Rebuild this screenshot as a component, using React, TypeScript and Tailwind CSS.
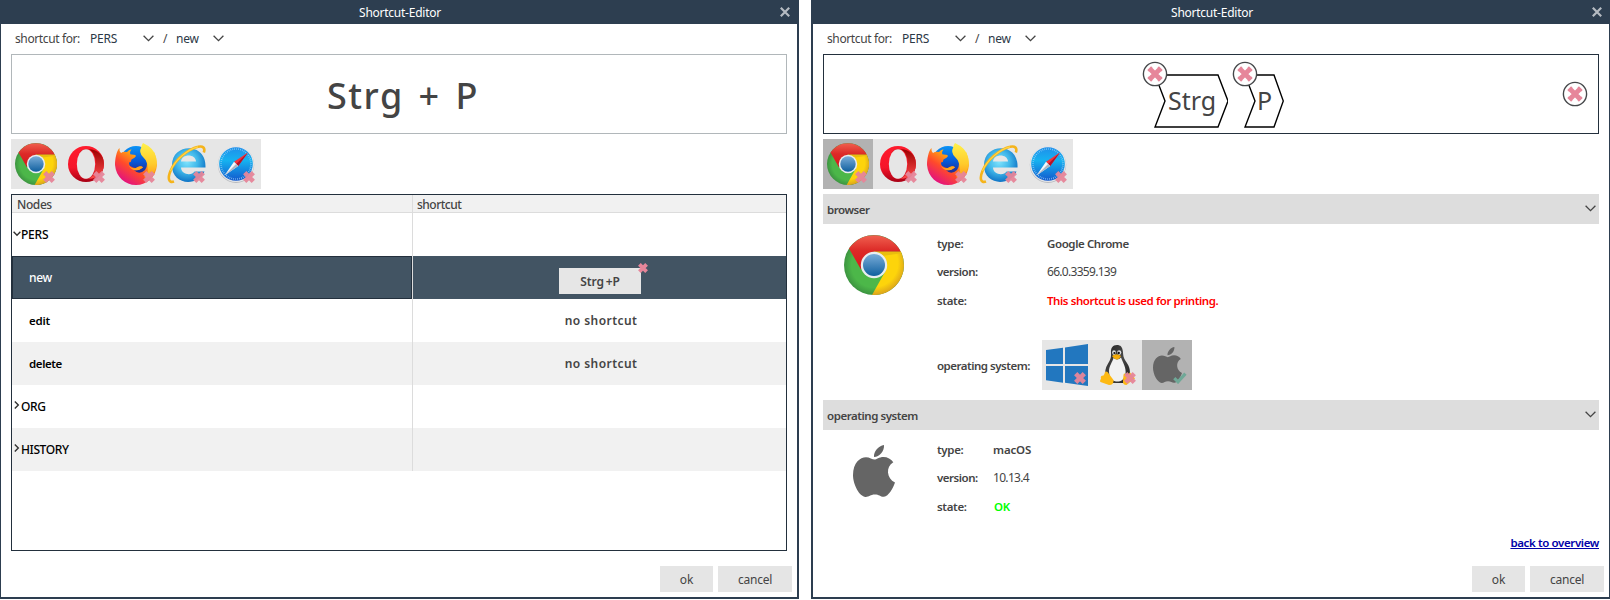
import React, { useId } from "react";

type IconProps = { className?: string };

function Cross({ className = "" }: IconProps) {
  return (
    <svg viewBox="0 0 12 12" className={className}>
      <path d="M1.7 1.7 10.3 10.3M10.3 1.7 1.7 10.3" stroke="#e6869a" strokeWidth="4.6" fill="none" />
    </svg>
  );
}

function CircledCross({ className = "" }: IconProps) {
  return (
    <svg viewBox="0 0 26 26" className={className}>
      <circle cx="13" cy="13" r="11.6" fill="#fff" stroke="#45474a" strokeWidth="1.4" />
      <path d="M8 8 18 18M18 8 8 18" stroke="#e6869a" strokeWidth="4.8" fill="none" />
      <path d="M6 9.800 9.800 6M16.200 6 20 9.800M6 16.200 9.800 20M20 16.200 16.200 20" stroke="#e6869a" strokeWidth="2" />
    </svg>
  );
}

function CheckMark({ className = "" }: IconProps) {
  return (
    <svg viewBox="0 0 14 12" className={className}>
      <path d="M1.300 6.200 5 9.800 12.400 1.600" stroke="#6fa897" strokeWidth="3.200" fill="none" />
    </svg>
  );
}

function Chevron({ className = "" }: IconProps) {
  return (
    <svg viewBox="0 0 11 7" className={className}>
      <path d="M.6 .7 5.500 5.600 10.400 .7" stroke="#444" strokeWidth="1.300" fill="none" />
    </svg>
  );
}

function TreeArrow({ className = "" }: IconProps) {
  return (
    <svg viewBox="0 0 8 6" className={className}>
      <path d="M.6 .8 4 4.300 7.400 .8" stroke="#333" strokeWidth="1.400" fill="none" />
    </svg>
  );
}

function Chrome({ className = "" }: IconProps) {
  const id = useId();
  return (
    <svg viewBox="0 0 60 60" className={className}>
      <defs>
        <linearGradient id={id + "r"} x1="0" y1="0" x2="0" y2="1">
          <stop offset="0" stopColor="#f0604f" />
          <stop offset=".45" stopColor="#dc2a27" />
          <stop offset="1" stopColor="#d8171c" />
        </linearGradient>
        <radialGradient id={id + "g"} cx=".5" cy=".5" r=".5">
          <stop offset=".75" stopColor="#4cb749" />
          <stop offset="1" stopColor="#3c9440" />
        </radialGradient>
        <radialGradient id={id + "y"} gradientUnits="userSpaceOnUse" cx="30" cy="28" r="32">
          <stop offset=".75" stopColor="#fdd40b" />
          <stop offset="1" stopColor="#dba31c" />
        </radialGradient>
        <linearGradient id={id + "b"} x1="0" y1="0" x2="0" y2="1">
          <stop offset="0" stopColor="#79acd8" />
          <stop offset="1" stopColor="#10609f" />
        </linearGradient>
      </defs>
      <circle cx="30" cy="30" r="30" fill={`url(#${id}g)`} />
      <path d="M30 16.5H56.7A30 30 0 0 1 28 60L41.5 36Z" fill={`url(#${id}y)`} />
      <path d="M30 16.5H56.7L57.4 18.2 38 21Z" fill="#e9be0e" />
      <path d="M5 13.6A30 30 0 0 1 56.7 16.5H30L17 34.5Z" fill={`url(#${id}r)`} />
      <circle cx="30" cy="30" r="13.2" fill="#e9edf0" />
      <circle cx="30" cy="30" r="11" fill={`url(#${id}b)`} />
    </svg>
  );
}

function Opera({ className = "" }: IconProps) {
  const id = useId();
  return (
    <svg viewBox="0 0 50 50" className={className}>
      <defs>
        <linearGradient id={id + "a"} x1="0" y1="0" x2="0" y2="1">
          <stop offset="0" stopColor="#ff1b2d" />
          <stop offset=".6" stopColor="#f5152a" />
          <stop offset="1" stopColor="#a70014" />
        </linearGradient>
        <linearGradient id={id + "b"} x1="0" y1="0" x2="0" y2="1">
          <stop offset="0" stopColor="#9c0000" />
          <stop offset="1" stopColor="#ff4b4b" />
        </linearGradient>
      </defs>
      <circle cx="25" cy="25" r="18" fill={`url(#${id}a)`} />
      <path d="M18.5 14C21 10.5 25 9 28.5 10.7 37 15 37 35 28.5 39.3 25 41 21 39.5 18.5 36 27 44 43 39 43 25S27 6 18.5 14" fill={`url(#${id}b)`} />
      <ellipse cx="25" cy="25" rx="9.2" ry="14.8" fill="#e6e6e6" />
    </svg>
  );
}

function Firefox({ className = "" }: IconProps) {
  const id = useId();
  return (
    <svg viewBox="0 0 50 50" className={className}>
      <defs>
        <linearGradient id={id + "a"} x1=".8" y1=".1" x2=".2" y2=".9">
          <stop offset="0" stopColor="#ffd83a" />
          <stop offset=".3" stopColor="#ff9b16" />
          <stop offset=".6" stopColor="#ff4a2b" />
          <stop offset="1" stopColor="#e3127e" />
        </linearGradient>
        <linearGradient id={id + "b"} x1="0" y1="0" x2="0" y2="1">
          <stop offset="0" stopColor="#0a93f5" />
          <stop offset=".5" stopColor="#0756d6" />
          <stop offset="1" stopColor="#33156e" />
        </linearGradient>
        <linearGradient id={id + "c"} x1="0" y1="0" x2="0" y2="1">
          <stop offset="0" stopColor="#fff14a" />
          <stop offset=".6" stopColor="#ffcb2c" />
          <stop offset="1" stopColor="#ff9a17" />
        </linearGradient>
      </defs>
      <circle cx="25" cy="23" r="16" fill={`url(#${id}b)`} />
      <path d="M8.5 9Q8 12 10 14 12.5 12 16 13 17.5 10.8 20.5 10.3 18.8 12.5 19.2 15.2L24.5 16Q25.5 17.5 23.5 18.8L20.5 20.5Q20.5 23.2 18 23.5 17.8 27 21 28 25 30 28.5 27.5 31 26.5 32 28.500 28 32 23 31 28 36.500 34 31 38 26 34 18L38 14 43 13Q46 19 46 26C45 38 36 46 25 46S5 38 4 26C4 20 5.500 12 8.500 9" fill={`url(#${id}a)`} />
      <path d="M32 4Q43 9 45 18 48 29 40 37 35 40 33 38 38 34 36.500 28 37 23 32 18 27.500 13 30 9 30.500 6 32 4" fill={`url(#${id}c)`} />
      <path d="M17 25Q19 30 25 29 29 25.800 32 28.500 28 32 23 31 19 30 17 25" fill="#ffa51c" />
    </svg>
  );
}

function Explorer({ className = "" }: IconProps) {
  const id = useId();
  return (
    <svg viewBox="0 0 50 50" className={className}>
      <defs>
        <radialGradient id={id + "a"} cx=".45" cy=".4" r=".62">
          <stop offset="0" stopColor="#7fe3fd" />
          <stop offset=".5" stopColor="#42b9ea" />
          <stop offset="1" stopColor="#0c70c4" />
        </radialGradient>
      </defs>
      <path fillRule="evenodd" d="M44.5 28.5H20C20.500 36.500 31.500 36.500 33.500 32.500H43.500C37 48 10.500 46.500 11 26 11 3.500 46 3 44.500 28.500M20 22.500H35C34.500 14.500 20.700 14.500 20 22.500" fill={`url(#${id}a)`} />
      <path d="M42.800 13.500C44.500 9 42 6.500 37 7.800 27 10 14 21 9.500 32 6.500 39 7.500 44.500 13 42.500" stroke="#f5b41b" strokeWidth="2.600" fill="none" />
      <path d="M37 7.800C27 10 14 21 9.500 32" stroke="#ffd447" strokeWidth="1.200" fill="none" />
    </svg>
  );
}

function Safari({ className = "" }: IconProps) {
  const id = useId();
  return (
    <svg viewBox="0 0 50 50" className={className}>
      <defs>
        <linearGradient id={id + "a"} x1="0" y1="0" x2="0" y2="1">
          <stop offset="0" stopColor="#1f8fea" />
          <stop offset=".4" stopColor="#16b2f0" />
          <stop offset="1" stopColor="#1258cd" />
        </linearGradient>
      </defs>
      <circle cx="25" cy="25.700" r="18.200" fill="#b7b9bd" />
      <circle cx="25" cy="25" r="18" fill="#e4e6ea" />
      <circle cx="25" cy="25" r="16.800" fill={`url(#${id}a)`} />
      <circle cx="25" cy="25" r="15" fill="none" stroke="#9fd4f7" strokeWidth="1.700" strokeDasharray=".6 1.360" />
      <path d="M37 13.500 27.200 27 23 22.800Z" fill="#f4343b" />
      <path d="M37 13.500 27.200 27 25.100 24.900Z" fill="#b3132a" />
      <path d="M13.500 36.500 23 22.800 27.200 27Z" fill="#f5f7fa" />
      <path d="M13.500 36.500 27.200 27 25.100 24.900Z" fill="#aeb6c2" />
    </svg>
  );
}

function Windows({ className = "" }: IconProps) {
  return (
    <svg viewBox="0 0 50 50" className={className}>
      <path d="M4 10 21 7.700V24H4ZM23 7.400 46 4V24H23ZM4 26H21V42.700L4 40.300ZM23 26H46V46L23 42.800Z" fill="#2277bf" />
    </svg>
  );
}

function Tux({ className = "" }: IconProps) {
  const id = useId();
  return (
    <svg viewBox="0 0 50 50" className={className}>
      <defs>
        <linearGradient id={id + "a"} x1="0" y1="0" x2="1" y2="1">
          <stop offset="0" stopColor="#222" />
          <stop offset=".5" stopColor="#484848" />
          <stop offset="1" stopColor="#1c1c1c" />
        </linearGradient>
      </defs>
      <path d="M25 5C20.500 5 18.600 8.500 19 12.500 19.300 18 18.300 20 15.800 24 13.300 28 12.500 32 14 37L20 43H32L37 37C39.500 30 36.500 25 33.300 20.500 31.300 17.500 31.200 15 30.900 11.500 30.400 7 28.500 5 25 5" fill={`url(#${id}a)`} />
      <path d="M21.500 18Q25.500 21 29 17.500C31 23 34.500 28 33.500 34 32 40.500 28 42 24 41.500 19 41 17 36 17 31 17 26 20.500 22 21.500 18" fill="#f1f1f1" />
      <ellipse cx="22" cy="12.600" rx="1.900" ry="2.300" fill="#ddd" />
      <ellipse cx="27.200" cy="12.600" rx="2.100" ry="2.400" fill="#ddd" />
      <circle cx="22.400" cy="13" r="1.100" fill="#111" />
      <circle cx="26.700" cy="13" r="1.200" fill="#111" />
      <path d="M20 16Q24.300 12.500 29 16 27 20 24 19.500 21.500 18.500 20 16" fill="#f5ac0a" />
      <path d="M13 32Q15 30.500 17 34L21.500 40Q22 45 17 45L8.500 42Q7.500 41 9 38.500 8 35.500 11.500 35.500 12.500 34.500 13 32" fill="#fdb913" />
      <path d="M31.500 35Q32 32.500 34 34.500 36 36 38 32.500L43 38.500Q38 42 34.500 45 30.500 45 31 41Z" fill="#fdb913" />
    </svg>
  );
}

function Apple({ className = "" }: IconProps) {
  return (
    <svg viewBox="0 0 42 52" className={className}>
      <path d="M31 0C31.500 6 26.500 12 21 12 20.500 6.500 25.500 .8 31 0M21.500 14.600C23.500 14.600 26 12 30.500 12 34.500 12 38 14 40.300 17.200 32.500 21.500 33.500 33.500 42 37.500 40 43.500 35.500 51.300 31 51.700 27.500 52 26.300 49.500 21.800 49.500S16 52 12.600 51.900C6.500 51.700 0 39.500 0 30 0 18 7 12.300 13 12.300 16.500 12.300 19.500 14.600 21.500 14.600" fill="#656565" />
    </svg>
  );
}

function Cell({ active, mark = "cross", children }: { active?: boolean; mark?: "cross" | "check"; children: React.ReactNode }) {
  return (
    <div className={"relative flex size-[50px] items-center justify-center " + (active ? "bg-[#b2b2b2]" : "")}>
      {children}
      {mark === "cross" ? <Cross className="absolute left-8 top-8 size-3 opacity-95" /> : <CheckMark className="absolute left-[31px] top-8 h-3 w-3.5" />}
    </div>
  );
}

function BrowserBar({ active }: { active?: boolean }) {
  return (
    <div className="my-[5px] flex w-[250px] bg-[#e6e6e6]">
      <Cell active={active}><Chrome className="size-[42px]" /></Cell>
      <Cell><Opera className="size-[50px]" /></Cell>
      <Cell><Firefox className="size-[50px]" /></Cell>
      <Cell><Explorer className="size-[50px]" /></Cell>
      <Cell><Safari className="size-[50px]" /></Cell>
    </div>
  );
}

function Window({ frame, children }: { frame: string; children: React.ReactNode }) {
  return (
    <section className={"flex h-[599px] w-[799px] flex-col border-b-2 border-[#2d3e50] bg-white " + frame}>
      <header className="relative flex h-6 items-center justify-center bg-[#2d3e50] pl-[2px] pt-[2px] text-white">
        <span className="tracking-[-0.25px]">Shortcut-Editor</span>
        <svg viewBox="0 0 10 10" className="absolute right-[7px] top-[7px] size-2.5">
          <path d="M.8 .8 9.200 9.200M9.200 .8 .8 9.200" stroke="#b5bbc2" strokeWidth="2.200" />
        </svg>
      </header>
      <div className="flex flex-1 flex-col px-[10px]">
        <div className="flex h-[30px] items-start leading-[30px]">
          <span className="ml-1 w-[75px] tracking-[-0.38px]">shortcut for:</span>
          <span className="w-[53px] tracking-[-0.25px] text-[#2b3846]">PERS</span>
          <Chevron className="mt-[11px] h-[7px] w-[11px]" />
          <span className="ml-[9px] w-[13px]">/</span>
          <span className="w-[37px] tracking-[-0.2px] text-[#2b3846]">new</span>
          <Chevron className="mt-[11px] h-[7px] w-[11px]" />
        </div>
        {children}
      </div>
      <footer className="flex gap-[5px] self-end pb-[5px] pr-[5px]">
        <button className="h-[26px] w-[53px] bg-[#e5e5e5] pt-[2px]">ok</button>
        <button className="h-[26px] w-[74px] bg-[#e5e5e5] pt-[2px] tracking-[-0.25px]">cancel</button>
      </footer>
    </section>
  );
}

function Row({ shade = "", left, right, selected }: { shade?: string; left: React.ReactNode; right?: React.ReactNode; selected?: boolean }) {
  return (
    <div className={"flex h-[43px] " + shade}>
      <div className={"flex w-[400px] items-center font-medium " + (selected ? "border border-[#23303d] text-white" : "border border-transparent text-black")}>{left}</div>
      <div className="w-px bg-[#dcdcdc]" />
      <div className="relative flex flex-1 items-center justify-center pl-[3px] font-semibold">{right}</div>
    </div>
  );
}

function Section({ title }: { title: string }) {
  return (
    <div className="flex h-[30px] items-center justify-between bg-[#ddd] pl-[4px] pr-[3px] font-semibold">
      <span className="pt-[2px] text-[11.5px] tracking-[-0.45px]">{title}</span>
      <Chevron className="mb-px h-[7px] w-[11px]" />
    </div>
  );
}

function KeyTag({ label, wide }: { label: string; wide?: boolean }) {
  return (
    <div className={"relative h-[54px] " + (wide ? "w-[74px]" : "w-[40px]")}>
      {wide ? (
        <svg viewBox="0 0 74 54" className="absolute inset-0 h-[54px] w-[74px]">
          <path d="M1 1H64L74 27 64 53H1L11 27Z" fill="none" stroke="#000" strokeWidth="1.400" />
        </svg>
      ) : (
        <svg viewBox="0 0 40 54" className="absolute inset-0 h-[54px] w-[40px]">
          <path d="M1 1H30L39.300 27 30 53H1L11 27Z" fill="none" stroke="#000" strokeWidth="1.400" />
        </svg>
      )}
      <span className={"relative block text-[25px] leading-[52px] " + (wide ? "pl-[14px]" : "pl-[13px]")}>{label}</span>
      <CircledCross className="absolute left-[-12px] top-[-13px] size-[26px]" />
    </div>
  );
}

export default function App() {
  return (
    <main className="flex h-[600px] w-[1610px] gap-3 overflow-hidden bg-white font-['Noto_Sans',sans-serif] text-[12px] leading-[16px] text-[#444]">
      <Window frame="border-l border-r-2">
        <div className="flex h-20 items-center justify-center border border-[#b1b7ba] pl-[8px] pt-[4px] text-[36px] font-medium tracking-[1.5px] [word-spacing:4px]">Strg + P</div>
        <BrowserBar />
        <div className="h-[357px] border border-[#23303d]">
          <div className="flex h-[18px] border-b border-[#dcdcdc] bg-[#f1f1f1] font-medium leading-[19px]">
            <span className="w-[400px] pl-[5px] tracking-[-0.4px]">Nodes</span>
            <span className="w-px bg-[#dcdcdc]" />
            <span className="pl-1 tracking-[-0.5px]">shortcut</span>
          </div>
          <Row left={<><TreeArrow className="mb-px h-[6px] w-[8px]" /><span className="tracking-[-0.2px]">PERS</span></>} />
          <Row
            selected
            shade="bg-[#425463]"
            left={<span className="pl-4 tracking-[-0.3px]">new</span>}
            right={
              <>
                <div className="absolute left-[146px] top-3 h-[26px] w-[82px] bg-[#e6e6e6] text-center leading-[27px] tracking-[-0.1px] [word-spacing:-1px]">Strg +P</div>
                <Cross className="absolute left-[225px] top-[7px] size-[10px]" />
              </>
            }
          />
          <Row left={<span className="pl-4 text-[11.5px] font-semibold tracking-[-0.25px]">edit</span>} right={<span className="tracking-[0.45px]">no shortcut</span>} />
          <Row shade="bg-[#f1f1f1]" left={<span className="pl-4 text-[11.5px] font-semibold tracking-[-0.4px]">delete</span>} right={<span className="tracking-[0.45px]">no shortcut</span>} />
          <Row left={<><TreeArrow className="mb-1 h-[6px] w-[8px] -rotate-90" /><span className="tracking-[-0.4px]">ORG</span></>} />
          <Row shade="bg-[#f1f1f1]" left={<><TreeArrow className="mb-1 h-[6px] w-[8px] -rotate-90" /><span className="tracking-[-0.4px]">HISTORY</span></>} />
        </div>
      </Window>

      <Window frame="border-l-2 border-r">
        <div className="relative flex h-20 justify-center gap-[16px] border border-[#23303d] pl-[16px] pt-[19px]">
          <KeyTag label="Strg" wide />
          <KeyTag label="P" />
          <CircledCross className="absolute right-[10px] top-[26px] size-[26px]" />
        </div>
        <BrowserBar active />
        <Section title="browser" />
        <div className="flex h-[176px] items-start">
          <Chrome className="ml-[21px] mt-[11px] size-[60px]" />
          <div className="ml-[33px] pt-[6px] text-[11.5px] font-semibold">
            <div className="grid grid-cols-[110px_auto] grid-rows-[28px_28px_30px] items-center">
              <span className="tracking-[-0.32px]">type:</span>
              <span className="tracking-[-0.4px]">Google Chrome</span>
              <span className="tracking-[-0.48px]">version:</span>
              <span className="text-[12px] font-normal tracking-[-0.7px]">66.0.3359.139</span>
              <span className="tracking-[-0.32px]">state:</span>
              <span className="tracking-[-0.42px] text-[#f00]">This shortcut is used for printing.</span>
            </div>
            <div className="mt-[24px] flex items-center">
              <span className="w-[105px] pt-[2px] tracking-[-0.49px]">operating system:</span>
              <div className="flex bg-[#e6e6e6]">
                <Cell><Windows className="size-[50px]" /></Cell>
                <Cell><Tux className="size-[50px]" /></Cell>
                <Cell active mark="check"><Apple className="h-9 w-[29px]" /></Cell>
              </div>
            </div>
          </div>
        </div>
        <Section title="operating system" />
        <div className="flex items-start">
          <Apple className="ml-[30px] mt-[15px] h-[52px] w-[42px]" />
          <div className="ml-[42px] grid grid-cols-[56px_auto] grid-rows-[28px_28px_30px] items-center pt-[6px] text-[11.5px] font-semibold">
            <span className="tracking-[-0.32px]">type:</span>
            <span className="tracking-[-0.15px]">macOS</span>
            <span className="tracking-[-0.48px]">version:</span>
            <span className="text-[12px] font-normal tracking-[-0.68px]">10.13.4</span>
            <span className="tracking-[-0.32px]">state:</span>
            <span className="pl-px tracking-[-0.4px] text-[#0f0]">OK</span>
          </div>
        </div>
        <a className="mt-[13px] self-end text-[11.5px] font-semibold tracking-[-0.38px] text-[#0000a8] underline">back to overview</a>
      </Window>
    </main>
  );
}
